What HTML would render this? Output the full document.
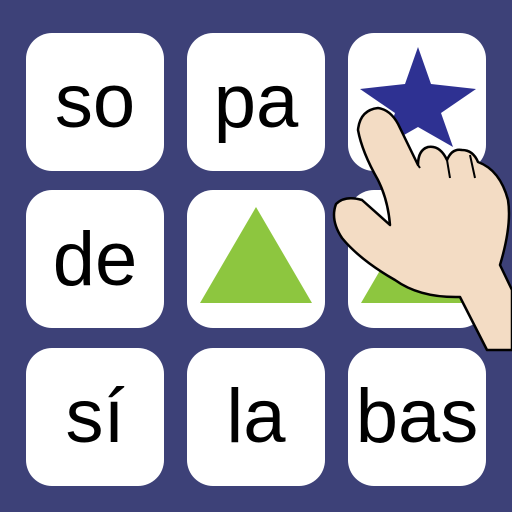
<!DOCTYPE html>
<html><head><style>html,body{margin:0;padding:0;background:#3d4178;}svg{display:block}</style></head>
<body>
<svg width="512" height="512" viewBox="0 0 512 512" xmlns="http://www.w3.org/2000/svg">
<rect width="512" height="512" fill="#3d4178"/>
<g fill="#fff">
<rect x="26" y="33" width="138" height="138" rx="26"/>
<rect x="187" y="33" width="138" height="138" rx="26"/>
<rect x="348" y="33" width="138" height="138" rx="26"/>
<rect x="26" y="190" width="138" height="138" rx="26"/>
<rect x="187" y="190" width="138" height="138" rx="26"/>
<rect x="348" y="190" width="138" height="138" rx="26"/>
<rect x="26" y="348" width="138" height="138" rx="26"/>
<rect x="187" y="348" width="138" height="138" rx="26"/>
<rect x="348" y="348" width="138" height="138" rx="26"/>
</g>
<g font-family="Liberation Sans, sans-serif" font-size="76" text-anchor="middle" fill="#000">
<text x="95" y="127">so</text>
<text x="256" y="127">pa</text>
<text x="95" y="285">de</text>
<text x="95" y="442">sí</text>
<text x="256" y="442">la</text>
<text x="417" y="442">bas</text>
</g>
<polygon points="418,47 431,84 476,89 441,113 453,147 418,127 383,147 395,113 360,89 405,84" fill="#2e3192"/>
<polygon points="256,207 312,303 200,303" fill="#8dc63f"/>
<polygon points="417,207 473,303 361,303" fill="#8dc63f"/>
<path d="M487,350 L460,297 Q420,298 395,280 Q360,260 342,238 Q330,220 336,204 Q345,195 362,200 L390,225 Q388,200 378,180 Q362,152 358,130 Q360,110 378,108 Q392,110 400,128 L418,165 Q418,150 428,147 Q440,145 447,160 Q452,148 462,150 Q473,150 478,162 Q500,170 508,200 Q512,225 500,265 L512,290 L512,350 Z" fill="#f3dcc4" stroke="#000" stroke-width="2.5" stroke-linejoin="round"/>
<path d="M418,165 L420,168 M447,160 L450,178 M470,155 L475,178" stroke="#000" stroke-width="2" fill="none"/>
</svg>
</body></html>
